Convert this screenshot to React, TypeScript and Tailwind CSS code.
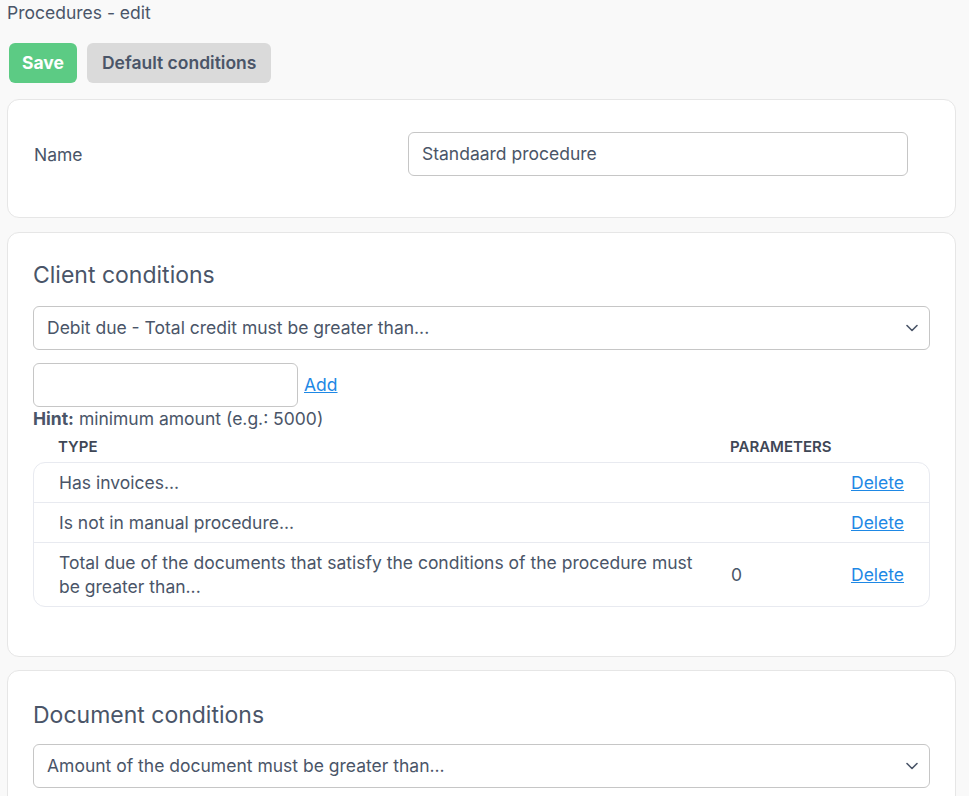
import React from 'react';

const Chevron = () => (
  <svg width="12" height="8" viewBox="0 0 12 8" fill="none" className="absolute right-[11px] top-1/2 -translate-y-1/2">
    <path d="M1 1.5L6 6.5L11 1.5" stroke="#4a5568" strokeWidth="1.6" strokeLinecap="round" strokeLinejoin="round" />
  </svg>
);

const SelectBox: React.FC<{ value: string }> = ({ value }) => (
  <div className="relative h-[44px] w-full rounded-md border border-[#c6c6c6] bg-white flex items-center px-[13px]">
    <span>{value}</span>
    <Chevron />
  </div>
);

const rows = [
  { type: 'Has invoices...', param: '' },
  { type: 'Is not in manual procedure...', param: '' },
  { type: 'Total due of the documents that satisfy the conditions of the procedure must be greater than...', param: '0' },
];

export default function App() {
  return (
    <div
      className="min-h-screen bg-[#f9f9f9] pl-[7px] pr-[13px] pb-10 text-[17.5px] text-[#4a5568]"
      style={{ fontFamily: 'Inter, "Noto Sans", sans-serif' }}
    >
      <div className="pt-[3px] leading-[20px]">Procedures - edit</div>

      <div className="mt-[20px] flex gap-[10px] pl-[2px]">
        <button className="h-10 px-[13px] rounded-md bg-[#5ccb84] text-white font-bold">Save</button>
        <button className="h-10 px-[15px] rounded-md bg-[#dadada] text-[#4a5568] font-semibold">Default conditions</button>
      </div>

      {/* name */}
      <div className="mt-4 rounded-xl border border-[#e6e6e6] bg-white px-[26px] pt-[32px] pb-[41px]">
        <div className="flex items-center">
          <div className="w-[374px] pt-[3px]">Name</div>
          <div className="w-[500px] h-[44px] rounded-md border border-[#c6c6c6] flex items-center px-[13px]">
            Standaard procedure
          </div>
        </div>
      </div>

      {/* client conditions */}
      <div className="mt-[14px] rounded-xl border border-[#e6e6e6] bg-white px-[25px] pt-[28px] pb-[49px]">
        <h2 className="text-[23px] leading-[28px] font-normal">Client conditions</h2>
        <div className="mt-[17px]">
          <SelectBox value="Debit due - Total credit must be greater than..." />
        </div>
        <div className="mt-[13px] flex items-center gap-[6px]">
          <div className="w-[265px] h-[44px] rounded-md border border-[#c6c6c6] bg-white" />
          <a href="#" className="text-[#1e88e5] underline">Add</a>
        </div>
        <div className="pt-[1px] leading-[22px]">
          <span className="font-bold">Hint:</span> minimum amount (e.g.: 5000)
        </div>

        <div className="mt-[5px] grid grid-cols-[672px_120px_1fr] px-[25px] h-[24px] items-center text-[15px] font-semibold uppercase text-[#3f4756]">
          <div>Type</div>
          <div>Parameters</div>
          <div />
        </div>
        <div className="mt-[3px] rounded-xl border border-[#e8eaf0]">
          {rows.map((r, i) => (
            <div
              key={i}
              className={`grid grid-cols-[672px_120px_1fr] items-center px-[25px] py-[7.5px] min-h-[39px] leading-[24px] ${i > 0 ? 'border-t border-[#e8eaf0]' : ''}`}
            >
              <div className="pr-[24px]">{r.type}</div>
              <div>{r.param}</div>
              <div className="text-right">
                <a href="#" className="text-[#1e88e5] underline">Delete</a>
              </div>
            </div>
          ))}
        </div>
      </div>

      {/* document conditions */}
      <div className="mt-[13px] rounded-xl border border-[#e6e6e6] bg-white px-[25px] pt-[30px] pb-[40px]">
        <h2 className="text-[23px] leading-[28px] font-normal">Document conditions</h2>
        <div className="mt-[15px]">
          <SelectBox value="Amount of the document must be greater than..." />
        </div>
      </div>
    </div>
  );
}
